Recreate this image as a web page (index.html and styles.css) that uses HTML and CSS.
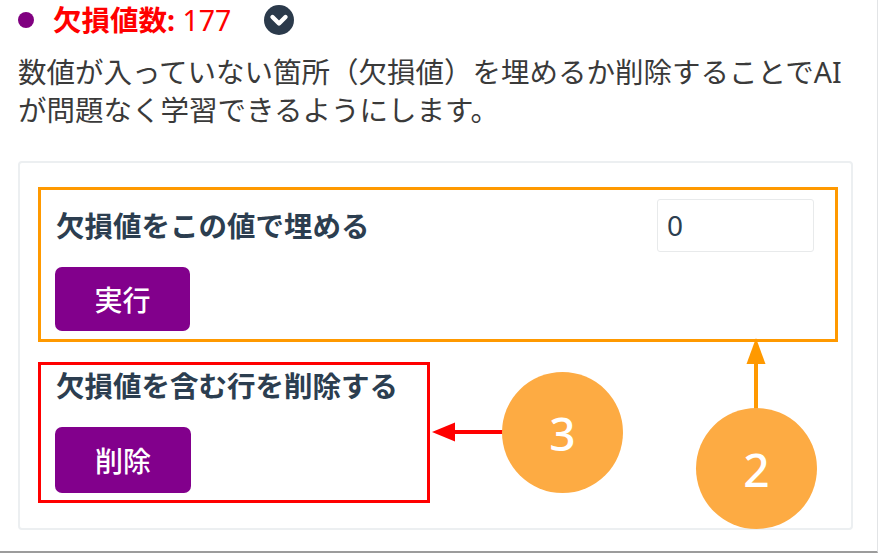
FILE: index.html
```html
<!DOCTYPE html>
<html lang="ja">
<head>
<meta charset="utf-8">
<title>欠損値</title>
<link rel="stylesheet" href="styles.css">
</head>
<body>
<div class="page">
  <div class="title-row">
    <span class="dot"></span>
    <span class="title"><b>欠損値数:</b> 177</span>
    <svg class="chev" viewBox="0 0 30 30" width="30" height="30" aria-hidden="true">
      <circle cx="15" cy="15" r="15" fill="#2b3a4b"/>
      <polyline points="8.5,12 15,18.5 21.5,12" fill="none" stroke="#fff" stroke-width="4.4" stroke-linecap="round" stroke-linejoin="round"/>
    </svg>
  </div>
  <p class="desc">数値が入っていない箇所（欠損値）を埋めるか削除することでAIが問題なく学習できるようにします。</p>
  <div class="card">
    <div class="box fill">
      <div class="row">
        <span class="heading">欠損値をこの値で埋める</span>
        <div class="input">0</div>
      </div>
      <button class="btn">実行</button>
    </div>
    <div class="box drop">
      <div class="heading">欠損値を含む行を削除する</div>
      <button class="btn btn-tall">削除</button>
    </div>
    <div class="annot">
      <svg class="arrows" viewBox="0 0 835 369" width="835" height="369" aria-hidden="true">
        <line x1="436" y1="271" x2="487" y2="271" stroke="#ff0000" stroke-width="4"/>
        <polygon points="414,271 437,261.5 437,280.5" fill="#ff0000"/>
        <line x1="738" y1="201" x2="738" y2="249" stroke="#ff9900" stroke-width="4"/>
        <polygon points="738,177 728.5,203 747.5,203" fill="#ff9900"/>
      </svg>
      <div class="badge b3">3</div>
      <div class="badge b2">2</div>
    </div>
  </div>
</div>
</body>
</html>
```
FILE: styles.css
```css
html, body {
  margin: 0;
  padding: 0;
  background: #ffffff;
}

body {
  font-family: "Noto Sans", "Noto Sans CJK JP", sans-serif;
}

.page {
  width: 878px;
  height: 553px;
  box-sizing: border-box;
  border-right: 1px solid #e2e4e6;
  border-bottom: 2px solid #9c9c9c;
  padding-left: 17px;
  overflow: hidden;
}

.title-row {
  display: flex;
  align-items: center;
  height: 40px;
}

.dot {
  width: 16px;
  height: 16px;
  border-radius: 50%;
  background: #800080;
  margin-left: 1px;
  margin-right: 19px;
  flex: none;
}

.title {
  font-size: 28.5px;
  line-height: 40px;
  color: #ff0000;
  white-space: nowrap;
}

.title b {
  font-weight: 700;
}

.chev {
  margin-left: 33px;
  flex: none;
}

.desc {
  margin: 13px 0 0 1px;
  width: 835px;
  font-size: 28.5px;
  line-height: 38px;
  color: #3a3a3a;
}

.card {
  position: relative;
  margin: 32px 0 0 1px;
  width: 835px;
  height: 369px;
  box-sizing: border-box;
  border: 2px solid #eceff1;
  border-radius: 4px;
  padding: 24px 0 0 18px;
}

.box {
  box-sizing: border-box;
  display: flex;
  flex-direction: column;
  align-items: flex-start;
}

.fill {
  width: 800px;
  height: 155px;
  border: 3px solid #ff9900;
  padding: 9px 21px 8px 14px;
  gap: 15px;
}

.row {
  align-self: stretch;
  display: flex;
  justify-content: space-between;
  align-items: center;
}

.heading {
  font-size: 28.5px;
  line-height: 32px;
  font-weight: 700;
  color: #2c3e50;
  padding-left: 1px;
  white-space: nowrap;
}

.input {
  width: 157px;
  height: 53px;
  box-sizing: border-box;
  border: 1px solid #e8eaeb;
  border-radius: 3px;
  padding-left: 9px;
  font-size: 28px;
  line-height: 51px;
  color: #2c3e50;
}

.btn {
  width: 135px;
  height: 64px;
  border: none;
  border-radius: 7px;
  background: #82008c;
  color: #ffffff;
  font-family: "Noto Sans CJK JP", "Noto Sans", sans-serif;
  font-size: 28px;
  font-weight: 500;
  padding: 0;
  margin: 0;
}

.btn-tall {
  width: 136px;
  height: 66px;
}

.drop {
  margin-top: 20px;
  width: 392px;
  height: 141px;
  border: 3px solid #ff0000;
  padding: 5px 0 7px 14px;
  gap: 25px;
}

.annot {
  position: absolute;
  left: -2px;
  top: -2px;
  width: 835px;
  height: 369px;
  pointer-events: none;
}

.arrows {
  position: absolute;
  left: 0;
  top: 0;
}

.badge {
  position: absolute;
  width: 121px;
  height: 121px;
  border-radius: 50%;
  background: #fdab43;
  color: #ffffff;
  font-size: 46px;
  font-weight: 500;
  display: flex;
  align-items: center;
  justify-content: center;
  line-height: 1;
}

.b3 {
  left: 484px;
  top: 211px;
}

.b2 {
  left: 678px;
  top: 247px;
}
```
